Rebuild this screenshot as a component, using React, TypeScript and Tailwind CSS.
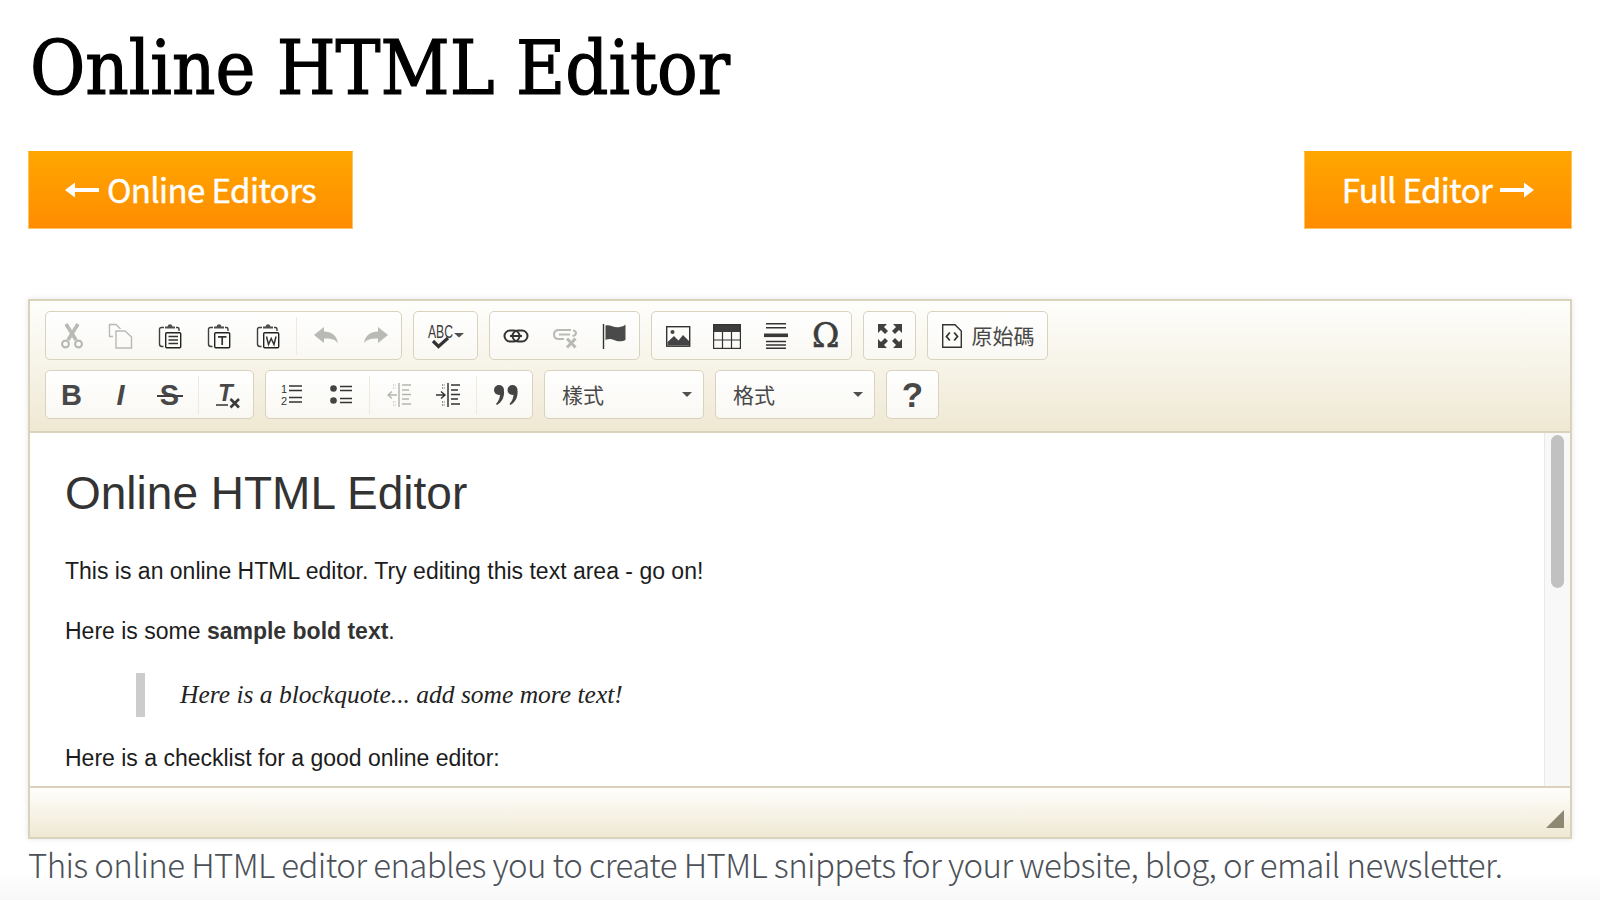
import React from "react";

const G = "#b9b9b5";
const CJK = { fontFamily: '"Noto Sans CJK TC", sans-serif' };

function Svg({ w = 26, h = 26, children }: { w?: number; h?: number; children: React.ReactNode }) {
  return (
    <svg width={w} height={h} viewBox={`0 0 ${w} ${h}`} className="block shrink-0">
      {children}
    </svg>
  );
}

const Cut = () => (
  <Svg>
    <path d="M19 1 L9 17 M7 1 L17 17" stroke={G} strokeWidth="3.6" fill="none" />
    <circle cx="6.5" cy="21" r="3.4" stroke={G} strokeWidth="2.2" fill="none" />
    <circle cx="19.5" cy="21" r="3.4" stroke={G} strokeWidth="2.2" fill="none" />
  </Svg>
);
const Copy = () => (
  <Svg>
    <path d="M5 13.5 H1.5 V1.5 H8 L12.5 6" stroke={G} strokeWidth="1.4" fill="none" />
    <path d="M8 8 H17 L23.5 14 V25 H8 Z" stroke={G} strokeWidth="1.4" fill="none" />
  </Svg>
);
const PasteBase = ({ children }: { children: React.ReactNode }) => (
  <Svg>
    <path d="M7 4.5 H4.5 Q2.5 4.5 2.5 6.5 V21 Q2.5 23.5 5 23.5 H6.5 M19 4.5 H20.5 Q22 4.5 22 6.5 V8" stroke="#3f3f3f" strokeWidth="1.4" fill="none" />
    <path d="M8 5.5 V3.5 H10.5 Q11 1.2 13 1.2 Q15 1.2 15.5 3.5 H18 V5.5 Z" fill="#4f4f4f" />
    <rect x="8.7" y="9.7" width="15" height="15" rx="1" stroke="#222" strokeWidth="1.4" fill="#fdfdfa" />
    {children}
  </Svg>
);
const Paste = () => (
  <PasteBase>
    <path d="M11.5 13.5 H21 M11.5 17 H21 M11.5 20.5 H21" stroke="#333" strokeWidth="1.5" />
  </PasteBase>
);
const PasteT = () => (
  <PasteBase>
    <path d="M12 13.8 H20.5 M16.2 13.8 V22" stroke="#333" strokeWidth="1.7" fill="none" />
  </PasteBase>
);
const PasteW = () => (
  <PasteBase>
    <path d="M11.5 13.5 L13.5 21.5 L16.2 15.5 L19 21.5 L21 13.5" stroke="#333" strokeWidth="1.5" fill="none" />
  </PasteBase>
);
const Undo = () => (
  <Svg>
    <path d="M1 12 L11 4 V8.5 C18 8.5 23.5 12 25 20 C21.5 16 17 15.5 11 15.5 V20 Z" fill={G} />
  </Svg>
);
const Redo = () => (
  <Svg>
    <path d="M25 12 L15 4 V8.5 C8 8.5 2.5 12 1 20 C4.5 16 9 15.5 15 15.5 V20 Z" fill={G} />
  </Svg>
);
const Spell = () => (
  <Svg w={38}>
    <text x="1" y="14.5" fontFamily="'Liberation Sans', sans-serif" fontSize="18" fill="#3c3c3c" textLength="25" lengthAdjust="spacingAndGlyphs">ABC</text>
    <path d="M6 18 L11.5 23.5 L21 15" stroke="#333" strokeWidth="3.2" fill="none" />
    <path d="M27 10 H37 L32 14.5 Z" fill="#505050" />
  </Svg>
);
const Link = () => (
  <Svg>
    <rect x="1.5" y="7.5" width="15" height="11" rx="5.5" stroke="#333" strokeWidth="2" fill="none" />
    <rect x="9.5" y="7.5" width="15" height="11" rx="5.5" stroke="#333" strokeWidth="2" fill="none" />
    <path d="M7 13 H19" stroke="#333" strokeWidth="2" />
  </Svg>
);
const Unlink = () => (
  <Svg>
    <path d="M19 7 H7 Q2 7 2 11.5 Q2 16 7 16 H12 M7 11.5 H18 M20.5 13 Q24 12.5 24 10 Q24 8 21 7.5" stroke={G} strokeWidth="2" fill="none" />
    <path d="M15 15.5 L23.5 24.5 M23.5 15.5 L15 24.5" stroke={G} strokeWidth="3" />
  </Svg>
);
const Flag = () => (
  <Svg>
    <path d="M2.5 1 V26" stroke="#333" strokeWidth="1.4" />
    <path d="M4.5 2.5 C9 1 13 5.5 19 4 C21 3.5 23 3 24.5 1.5 V17 C21 19 16 18.5 13 17 C10 15.5 7 15.5 4.5 17 Z" fill="#4a4a4a" />
  </Svg>
);
const Img = () => (
  <Svg>
    <rect x="1.7" y="3.7" width="23" height="19.5" stroke="#333" strokeWidth="1.4" fill="#fdfdfa" />
    <circle cx="7.5" cy="9" r="2" fill="#444" />
    <path d="M2.5 22.5 V19 L9 13 L13.5 17.5 L18 12 L24 18 V22.5 Z" fill="#444" />
  </Svg>
);
const Table = () => (
  <Svg w={30}>
    <rect x="1" y="1" width="28" height="8" fill="#3d3d3d" />
    <rect x="1.6" y="1.6" width="26.8" height="23.8" stroke="#333" strokeWidth="1.2" fill="none" />
    <path d="M10.5 9 V25 M19.5 9 V25 M1 17 H29" stroke="#333" strokeWidth="1.2" />
  </Svg>
);
const Hr = () => (
  <Svg>
    <path d="M3 0.8 H23 M3 4.8 H23 M3 18.5 H23 M3 22 H23 M3 25.2 H23" stroke="#333" strokeWidth="1.4" />
    <rect x="1" y="10.5" width="24" height="3.6" fill="#3a3a3a" />
  </Svg>
);
const Omega = () => (
  <span className="block w-[26px] text-center text-[33px] leading-[26px] text-[#3c3c3c] [-webkit-text-stroke:0.6px_#3c3c3c]" style={{ fontFamily: '"DejaVu Serif", serif' }}>
    Ω
  </span>
);
const Max = () => (
  <Svg>
    <g fill="#404040">
      <path d="M1 1 H10 L7 4 L11 8 L8 11 L4 7 L1 10 Z" />
      <path d="M25 1 H16 L19 4 L15 8 L18 11 L22 7 L25 10 Z" />
      <path d="M1 25 H10 L7 22 L11 18 L8 15 L4 19 L1 16 Z" />
      <path d="M25 25 H16 L19 22 L15 18 L18 15 L22 19 L25 16 Z" />
    </g>
  </Svg>
);
const Source = () => (
  <Svg w={22}>
    <path d="M1.7 1.7 H14 L20.3 8 V24.3 H1.7 Z" stroke="#333" strokeWidth="1.4" fill="#fdfdfa" />
    <path d="M8.8 9.5 L5.5 13.5 L8.8 17.5 M13.2 9.5 L16.5 13.5 L13.2 17.5" stroke="#333" strokeWidth="1.8" fill="none" />
  </Svg>
);
const Letter = ({ ch, italic, strike }: { ch: string; italic?: boolean; strike?: boolean }) => (
  <span
    className={`relative block w-[26px] text-center text-[29px] leading-[26px] font-bold text-[#484848] ${italic ? "italic" : ""}`}
    style={{ fontFamily: '"Liberation Sans", sans-serif' }}
  >
    {ch}
    {strike ? <span className="absolute left-0 top-[13px] h-[2px] w-[26px] bg-[#404040]" /> : null}
  </span>
);
const RemoveFormat = () => (
  <Svg h={34}>
    <g transform="translate(0,4)">
      <text x="3" y="19" fontFamily="'Liberation Sans', sans-serif" fontStyle="italic" fontWeight="700" fontSize="24" fill="#484848">T</text>
      <path d="M1 23 H13" stroke="#404040" strokeWidth="1.6" />
      <path d="M15.5 17 L24 25.5 M24 17 L15.5 25.5" stroke="#3a3a3a" strokeWidth="2.6" />
    </g>
  </Svg>
);
const Ol = () => (
  <Svg>
    <text x="2" y="11" fontFamily="'Liberation Sans', sans-serif" fontSize="11" fill="#333">1</text>
    <text x="2" y="23" fontFamily="'Liberation Sans', sans-serif" fontSize="11" fill="#333">2</text>
    <path d="M10 4 H23 M10 8.5 H23 M10 15.5 H23 M10 20 H23" stroke="#333" strokeWidth="1.5" />
  </Svg>
);
const Ul = () => (
  <Svg>
    <circle cx="5.5" cy="6.5" r="3.3" fill="#444" />
    <circle cx="5.5" cy="18.5" r="3.3" fill="#444" />
    <path d="M12 4.5 H24 M12 8.5 H24 M12 16.5 H24 M12 20.5 H24" stroke="#333" strokeWidth="1.5" />
  </Svg>
);
const Indent = ({ c, out }: { c: string; out?: boolean }) => (
  <Svg>
    <path d="M13 1 V25" stroke={c} strokeWidth="1.5" />
    <path d="M16 3 H25 M16 8 H23 M16 12.5 H25 M16 17 H23 M16 22 H25" stroke={c} strokeWidth="1.4" />
    <path d="M7 3 H10 M7 6 H10 M7 20 H10 M7 23 H10" stroke={c} strokeWidth="1.2" strokeDasharray="1.2 1.2" />
    {out ? (
      <path d="M11 13 H5 M5 13 L2 13 M6 9.5 L2 13 L6 16.5" stroke={c} strokeWidth="1.4" fill="none" />
    ) : (
      <path d="M1 13 H9 M6 9.5 L10 13 L6 16.5" stroke={c} strokeWidth="1.4" fill="none" />
    )}
  </Svg>
);
const Quote = () => (
  <Svg>
    <g fill="#444">
      <circle cx="6" cy="8" r="5" />
      <path d="M8 9 H11 C11.5 15 9 20 4 23 L3 22 C6 19 7 15 7 12 Z" />
      <circle cx="19.5" cy="8" r="5" />
      <path d="M21.5 9 H24.5 C25 15 22.5 20 17.5 23 L16.5 22 C19.5 19 20.5 15 20.5 12 Z" />
    </g>
  </Svg>
);
const Help = () => (
  <span className="block w-[26px] text-center text-[35px] leading-[26px] font-bold text-[#484848]" style={{ fontFamily: '"Liberation Sans", sans-serif' }}>
    ?
  </span>
);

const Group = ({ children }: { children: React.ReactNode }) => (
  <div className="flex h-[49px] items-center rounded-[5px] border-[1.5px] border-[#d9d2bd] bg-gradient-to-b from-[#ffffff] to-[#f9f8f3] px-[1px]">
    {children}
  </div>
);
const Btn = ({ children, w = "w-[49px]" }: { children: React.ReactNode; w?: string }) => (
  <div className={`flex h-full items-center justify-center ${w}`}>{children}</div>
);
const Sep = () => <div className="mx-[4px] h-[38px] w-[1px] bg-[#efeadb]" />;

const Combo = ({ label }: { label: string }) => (
  <div className="flex h-[49px] w-[160px] items-center justify-between rounded-[5px] border-[1.5px] border-[#d9d2bd] bg-gradient-to-b from-[#ffffff] to-[#f9f8f3] pl-[17px] pr-[11px]">
    <span className="text-[21px] leading-none text-[#484848]" style={CJK}>{label}</span>
    <span className="h-0 w-0 border-x-[5px] border-t-[5px] border-x-transparent border-t-[#505050]" />
  </div>
);

const Arrow = ({ right }: { right?: boolean }) => (
  <svg width="34" height="18" viewBox="0 0 34 18" className="block shrink-0">
    {right ? <path d="M0 7 H24 L24 1.5 L34 9 L24 16.5 V11 H0 Z" fill="#fff" /> : <path d="M34 7 H10 L10 1.5 L0 9 L10 16.5 V11 H34 Z" fill="#fff" />}
  </svg>
);

const OrangeBtn = ({ children, w }: { children: React.ReactNode; w: string }) => (
  <div
    className={`flex h-[78px] items-center justify-center gap-[8px] border border-[#ffc266] border-t-[#ffa500] bg-gradient-to-b from-[#ffa600] to-[#ff8c00] text-[33px] tracking-[-0.6px] text-white [-webkit-text-stroke:0.4px_white] ${w}`}
    style={CJK}
  >
    {children}
  </div>
);

export default function App() {
  return (
    <div className="relative h-[900px] w-[1600px] overflow-hidden bg-gradient-to-b from-[#ffffff] from-[97%] to-[#f7f7f7] px-[28px]">
      <h1
        className="pt-[26px] pl-[2px] text-[75px] leading-[84px] text-black [-webkit-text-stroke:1.2px_black]"
        style={{ fontFamily: '"DejaVu Serif Condensed", "DejaVu Serif", serif' }}
      >
        Online HTML Editor
      </h1>
      <div className="mt-[41px] flex justify-between">
        <OrangeBtn w="w-[325px]"><Arrow />Online Editors</OrangeBtn>
        <OrangeBtn w="w-[268px]">Full Editor<Arrow right /></OrangeBtn>
      </div>

      <div className="mt-[70px] flex h-[540px] flex-col border-2 border-[#d9d2bd] shadow-[0_0_6px_rgba(0,0,0,0.1)]">
        <div className="flex h-[132px] shrink-0 flex-col gap-[10px] border-b-2 border-[#d9d2bd] bg-gradient-to-b from-[#fefefc] to-[#efe8d3] pl-[15px] pt-[10px]">
          <div className="flex gap-[11px]">
            <Group>
              <Btn><Cut /></Btn>
              <Btn><Copy /></Btn>
              <Btn><Paste /></Btn>
              <Btn><PasteT /></Btn>
              <Btn><PasteW /></Btn>
              <Sep />
              <Btn w="w-[50px]"><Undo /></Btn>
              <Btn><Redo /></Btn>
            </Group>
            <Group><Btn w="w-[61px]"><Spell /></Btn></Group>
            <Group>
              <Btn><Link /></Btn>
              <Btn><Unlink /></Btn>
              <Btn><Flag /></Btn>
            </Group>
            <Group>
              <Btn><Img /></Btn>
              <Btn><Table /></Btn>
              <Btn><Hr /></Btn>
              <Btn w="w-[50px]"><Omega /></Btn>
            </Group>
            <Group><Btn><Max /></Btn></Group>
            <Group>
              <Btn w="w-[117px]">
                <div className="flex items-center gap-[9px]">
                  <Source />
                  <span className="text-[21px] leading-none text-[#484848]" style={CJK}>原始碼</span>
                </div>
              </Btn>
            </Group>
          </div>
          <div className="flex gap-[11px]">
            <Group>
              <Btn><Letter ch="B" /></Btn>
              <Btn><Letter ch="I" italic /></Btn>
              <Btn><Letter ch="S" strike /></Btn>
              <Sep />
              <Btn><RemoveFormat /></Btn>
            </Group>
            <Group>
              <Btn><Ol /></Btn>
              <Btn><Ul /></Btn>
              <Sep />
              <Btn><Indent c="#b5b5b0" out /></Btn>
              <Btn><Indent c="#333" /></Btn>
              <Sep />
              <Btn w="w-[50px]"><Quote /></Btn>
            </Group>
            <Combo label="樣式" />
            <Combo label="格式" />
            <Group><Btn><Help /></Btn></Group>
          </div>
        </div>

        <div className="relative flex min-h-0 flex-1 overflow-hidden bg-white">
          <div className="flex-1 pl-[35px] text-[#1c1c1c]" style={{ fontFamily: '"Liberation Sans", Arial, sans-serif' }}>
            <h2 className="mt-[34px] text-[46px] leading-[52px] text-[#333]">Online HTML Editor</h2>
            <p className="mt-[36px] text-[23px] leading-[32px]">This is an online HTML editor. Try editing this text area - go on!</p>
            <p className="mt-[28px] text-[23px] leading-[32px]">
              Here is some <strong className="font-bold text-[#333]">sample bold text</strong>.
            </p>
            <blockquote
              className="ml-[71px] mt-[26px] border-l-[9px] border-[#cccccc] pl-[35px] text-[25.5px] italic leading-[44px] text-[#222]"
              style={{ fontFamily: '"Liberation Serif", Georgia, serif' }}
            >
              Here is a blockquote... add some more text!
            </blockquote>
            <p className="mt-[25px] text-[23px] leading-[32px]">Here is a checklist for a good online editor:</p>
          </div>
          <div className="w-[26px] shrink-0 border-l border-[#e8e8e8] bg-[#f8f8f8] px-[6px] pt-[2px]">
            <div className="h-[153px] w-[13px] rounded-full bg-[#c1c1c1]" />
          </div>
        </div>

        <div className="flex h-[51px] shrink-0 items-end justify-end border-t-2 border-[#d9d2bd] bg-gradient-to-b from-[#fefefc] to-[#efe8d3] pb-[9px] pr-[6px]">
          <svg width="18" height="18" viewBox="0 0 18 18" className="block">
            <path d="M18 0 V18 H0 Z" fill="#8c8872" />
          </svg>
        </div>
      </div>

      <p className="mt-[2px] text-[33px] font-light leading-[46px] tracking-[-0.6px] text-[#4c5158]" style={CJK}>
        This online HTML editor enables you to create HTML snippets for your website, blog, or email newsletter.
      </p>
    </div>
  );
}
